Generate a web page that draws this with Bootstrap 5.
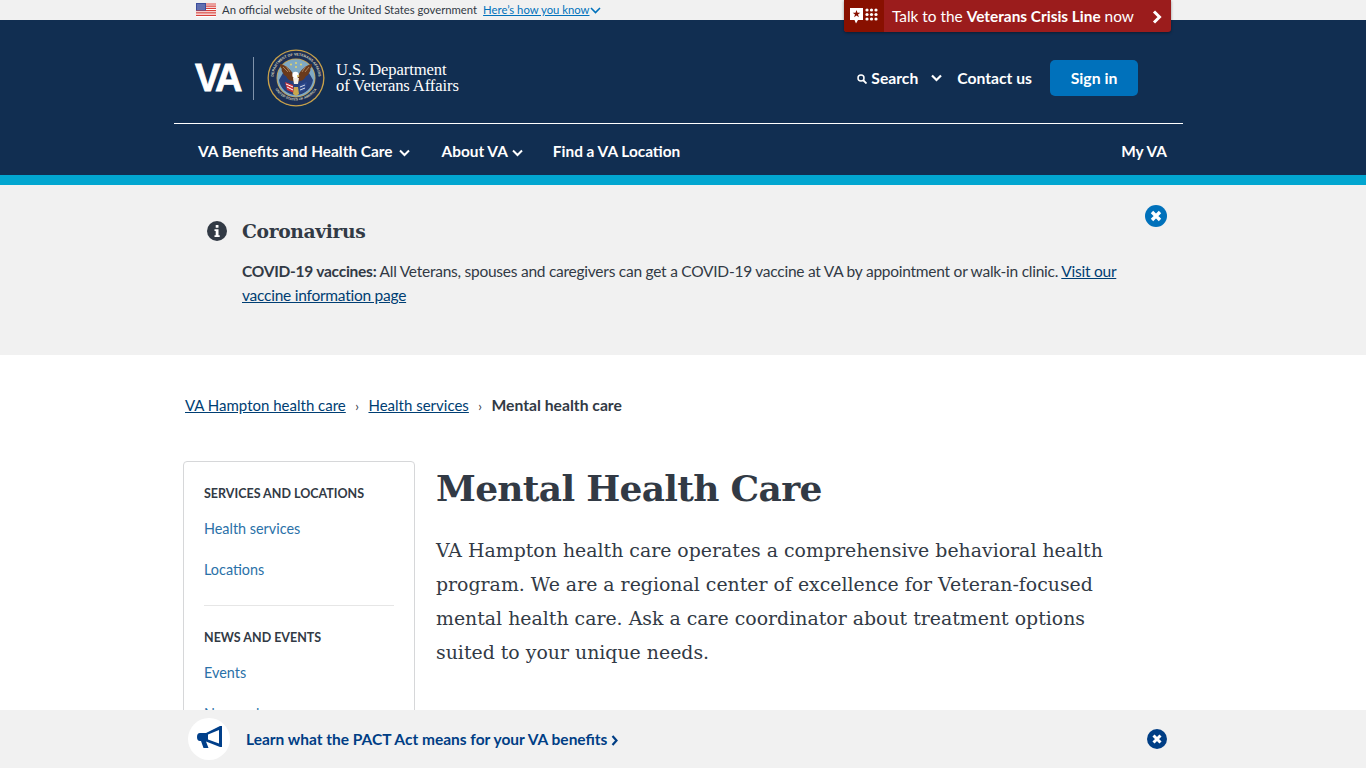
<!DOCTYPE html>
<html lang="en"><head><meta charset="utf-8"><title>Mental Health Care</title>
<link href="https://cdn.jsdelivr.net/npm/bootstrap@5.3.0/dist/css/bootstrap.min.css" rel="stylesheet">
<style>
html,body{height:768px;overflow:hidden}
body{font-family:Lato,"Liberation Sans",sans-serif;color:#323a45;font-size:16px;background:#fff}
.va-wrap{width:1009px;margin-left:174px}
.gov-bar{height:20px;background:#f1f1f1;font-size:11.3px;line-height:20px;padding-left:22px}
.gov-bar a{color:#0071bb;margin-left:6px;margin-right:1px}
.flag{width:20px;height:14px;margin-right:6px}
.crisis{position:absolute;left:844px;top:0;width:327px;height:32px;padding-top:1px;background:#9b1c1c;color:#fff;border-radius:0 0 3px 3px;box-shadow:0 1px 3px rgba(0,0,0,.4);font-size:15.4px}
.crisis-ico{width:40px;height:32px;margin-top:-1px;background:#881000;border-radius:0 0 0 3px}
.head{background:#112e51;height:155px;color:#fff}
.logo-row{height:104px;padding:13px 45px 0 21px;border-bottom:1px solid #fff}
.va-mark{font:700 38px/1 "Liberation Sans",sans-serif;letter-spacing:-2.6px;width:47px;-webkit-text-stroke:.8px #fff}
.va-sep{width:1px;height:43px;background:#7f93ab;margin:0 13px 0 11px}
.seal{width:58px;height:58px;margin-right:11px}
.dept{font:16.6px/16px "Liberation Serif",serif;letter-spacing:-.1px}
.util{font-weight:700;font-size:15.7px;color:#fff;text-decoration:none;padding-top:2px}
.util-chev{margin:0 15px 0 13px}
.util-last{margin-right:18px}
.signin{background:#0071bb;color:#fff;font-weight:700;font-size:15.8px;border:0;border-radius:5px;width:88px;height:36px;padding:0}
.nav-row{height:51px;padding:5px 16px 0 24px;font-weight:700;font-size:15.4px}
.nav-row a{color:#fff;text-decoration:none}
.nav-gap{margin-left:32px}
.nav-gap2{margin-left:30px}
.chev{width:11px;height:8px;margin-left:6px}
.chev.tight{margin-left:4px}
.stripe{height:10px;background:#02a6d0}
.alert-band{height:170px;background:#f1f1f1}
.alert-in{padding:33px 16px 0 33px}
.ai{width:20px;height:20px;margin-top:3px;margin-right:15px}
.alert-h{font:700 18.7px/26px "DejaVu Serif",serif;letter-spacing:-.35px;margin:0 0 15px}
.alert-t{font-size:15.5px;letter-spacing:-.25px;line-height:24px;margin:0;width:885px}
.alert-t a,.crumbs a{color:#003e73}
.close-x{width:22px;height:22px;position:absolute;left:1145px;top:205px}
.crumbs{margin:40px 0 0 11px;height:20px;font-size:15px;line-height:20px}
.crumbs i{font-style:normal;margin:0 9.5px;font-size:13px}
.crumbs b{font-size:15.7px}
.body-row{margin:46px 0 0 9px}
.side{width:232px;height:400px;border:1px solid #d6d7d9;border-radius:4px;padding:22px 20px;flex:none;margin-right:21px}
.side h2{font-size:12.5px;font-weight:700;margin:0;line-height:20px;text-transform:uppercase}
.side a{display:block;color:#2a71a8;text-decoration:none;font-size:14.4px;line-height:20px}
.side a.first-l{margin-top:15px}
.side a.next-l{margin-top:21px}
.side hr{margin:25px 0 22px;border-color:#9a9a9a}
h1.pg{font:700 36px/50px "DejaVu Serif",serif;letter-spacing:-.7px;margin:2px 0 20px}
.intro{font:18.9px/34px "DejaVu Serif",serif;width:690px;margin:0}
.promo{position:fixed;left:0;right:0;bottom:0;height:58px;background:#f1f1f1}
.promo-c{width:42px;height:42px;border-radius:50%;background:#fff;margin:0 16px 0 14px}
.promo-c svg{margin-top:-4px}
.promo a{color:#003e85;font-weight:700;font-size:15.5px;text-decoration:none;padding-top:1px}
.promo-x{width:20px;height:20px;position:absolute;left:1147px;top:19px}
</style></head><body>
<div class="gov-bar"><div class="va-wrap d-flex align-items-center">
<svg class="flag" viewBox="0 0 20 14"><rect width="20" height="14" fill="#fff"/><path d="M0 1h20M0 3.200h20M0 5.400h20M0 7.600h20M0 9.800h20M0 12.400h20" stroke="#d8403a" stroke-width="1.200"/><rect width="10" height="7.500" fill="#3b4d9c"/><path d="M1.500 2h7M1.500 4h7M1.500 6h7" stroke="#fff" stroke-width=".8" stroke-dasharray="1 1"/></svg>
<span>An official website of the United States government</span> <a href="#">Here’s how you know</a>
<svg width="11" height="7" viewBox="0 0 11 7"><path d="M1 1l4.500 4.500L10 1" fill="none" stroke="#0071bb" stroke-width="1.600"/></svg>
</div></div>
<div class="crisis d-flex align-items-center">
<div class="crisis-ico d-flex align-items-center justify-content-center"><svg width="28" height="16" viewBox="0 0 28 16"><path d="M0 0h13v12H8l-2 3.500-1.500-3.500H0z" fill="#fff"/><path d="M6.500 2l1 2.700h2.800L8 6.400l.9 2.800-2.400-1.700-2.400 1.700.9-2.800L2.700 4.700h2.800z" fill="#881000"/><g fill="#fff"><circle cx="17" cy="2" r="1.600"/><circle cx="21.500" cy="2" r="1.600"/><circle cx="26" cy="2" r="1.600"/><circle cx="17" cy="6.500" r="1.600"/><circle cx="21.500" cy="6.500" r="1.600"/><circle cx="26" cy="6.500" r="1.600"/><circle cx="17" cy="11" r="1.600"/><circle cx="21.500" cy="11" r="1.600"/><circle cx="26" cy="11" r="1.600"/></g></svg></div>
<span class="ms-2">Talk to the <b>Veterans Crisis Line</b> now</span>
<svg class="ms-auto me-2" width="12" height="14" viewBox="0 0 12 14"><path d="M3 1.500L8.500 7 3 12.500" fill="none" stroke="#fff" stroke-width="3"/></svg>
</div>
<header class="head"><div class="va-wrap">
<div class="logo-row d-flex align-items-center">
<span class="va-mark">VA</span><span class="va-sep"></span>
<svg class="seal" viewBox="0 0 58 58">
<defs><path id="sealTop" d="M10.600 42A22.500 22.500 0 1 1 47.400 42"/><path id="sealBot" d="M6 36A24.800 24.800 0 0 0 52 36"/></defs>
<circle cx="29" cy="29" r="28.500" fill="#c9a24a"/><circle cx="29" cy="29" r="27.200" fill="#1b2f56"/><circle cx="29" cy="29" r="19.500" fill="#c9a24a"/><circle cx="29" cy="29" r="18.700" fill="#7fa9c4"/>
<text font-family="Liberation Sans,sans-serif" font-size="3.600" font-weight="700" fill="#d9d3b8"><textPath href="#sealTop" startOffset="50%" text-anchor="middle">DEPARTMENT OF VETERANS AFFAIRS</textPath></text>
<text font-family="Liberation Sans,sans-serif" font-size="3.400" font-weight="700" fill="#d9d3b8"><textPath href="#sealBot" startOffset="50%" text-anchor="middle">UNITED STATES OF AMERICA</textPath></text>
<path d="M12 31l4-7 13 8 13-8 4 7c-1 8-8 15-17 15s-16-7-17-15z" fill="#26407c"/>
<path d="M28 29C25 21 19 16 13 15c0 3 1 4 2 5-1 0 0 3 1 4 0 1 2 3 3 3 1 3 4 5 7 5l1 2h4l1-2c3 0 6-2 7-5 1 0 3-2 3-3 1-1 2-4 1-4 1-1 2-2 2-5-6 1-12 6-15 14z" fill="#6a3a1c"/>
<path d="M16 18l5 5M19 17l4 6M38 23l4-5M35 23l4-6" stroke="#a8815a" stroke-width="1"/>
<circle cx="28.500" cy="26" r="3.200" fill="#fff"/><path d="M30 26l3 1-3 1z" fill="#e3c95a"/><path d="M26 29h6l-1 6h-4z" fill="#f2efe6"/>
<path d="M18 33l8 3 1 8-7-3z" fill="#c8323a"/><path d="M19 35l7 3M20 38l6 3" stroke="#fff" stroke-width="1"/><path d="M40 33l-8 3-1 8 7-3z" fill="#2d4a8e"/><path d="M38 36l-5 2M38 39l-5 2" stroke="#fff" stroke-width=".8"/><path d="M27 38h4l1 7-3 2-3-2z" fill="#c8a84e"/>
<g fill="#e3d76a"><circle cx="24" cy="15.500" r="1"/><circle cx="29" cy="14" r="1"/><circle cx="34" cy="15.500" r="1"/><circle cx="29" cy="18" r="1"/></g></svg>
<div class="dept">U.S. Department<br>of Veterans Affairs</div>
<div class="ms-auto d-flex align-items-center">
<a class="util d-flex align-items-center" href="#"><svg width="10" height="10" viewBox="0 0 10 10" class="me-1"><circle cx="4" cy="4" r="3" fill="none" stroke="#fff" stroke-width="1.500"/><path d="M6 6l3.500 3.500" stroke="#fff" stroke-width="1.800"/></svg>Search</a>
<svg class="util-chev" width="11" height="8" viewBox="0 0 11 8"><path d="M1 1.500l4.500 4.500L10 1.500" fill="none" stroke="#fff" stroke-width="2.200"/></svg>
<a class="util util-last" href="#">Contact us</a>
<button class="signin btn">Sign in</button>
</div></div>
<nav class="nav-row d-flex align-items-center">
<a href="#">VA Benefits and Health Care<svg class="chev" viewBox="0 0 11 8"><path d="M1 1.500l4.500 4.500 4.500-4.500" fill="none" stroke="#fff" stroke-width="2"/></svg></a>
<a class="nav-gap" href="#">About VA<svg class="chev tight" viewBox="0 0 11 8"><path d="M1 1.500l4.500 4.500 4.500-4.500" fill="none" stroke="#fff" stroke-width="2"/></svg></a>
<a class="nav-gap2" href="#">Find a VA Location</a>
<a class="ms-auto" href="#">My VA</a>
</nav></div></header>
<div class="stripe"></div>
<section class="alert-band"><div class="va-wrap alert-in d-flex">
<svg class="ai" viewBox="0 0 20 20"><circle cx="10" cy="10" r="10" fill="#323a45"/><rect x="8.700" y="4" width="2.800" height="2.800" rx=".6" fill="#fff"/><path d="M7.500 8.300h4v6h1.200v1.700H7.500v-1.700h1.200V10H7.500z" fill="#fff"/></svg>
<div><h3 class="alert-h">Coronavirus</h3>
<p class="alert-t"><b>COVID-19 vaccines:</b> All Veterans, spouses and caregivers can get a COVID-19 vaccine at VA by appointment or walk-in clinic. <a href="#">Visit our vaccine information page</a></p></div>
</div></section>
<svg class="close-x" viewBox="0 0 22 22"><circle cx="11" cy="11" r="11" fill="#0071bb"/><path d="M7 7l8 8M15 7l-8 8" stroke="#fff" stroke-width="3.400"/></svg>
<div class="va-wrap">
<nav class="crumbs"><a href="#">VA Hampton health care</a><i>›</i><a href="#">Health services</a><i>›</i><b>Mental health care</b></nav>
<div class="body-row d-flex">
<aside class="side">
<h2>Services and locations</h2>
<a class="first-l" href="#">Health services</a><a class="next-l" href="#">Locations</a>
<hr>
<h2>News and events</h2>
<a class="first-l" href="#">Events</a><a class="next-l" href="#">News releases</a>
</aside>
<main><h1 class="pg">Mental Health Care</h1>
<p class="intro">VA Hampton health care operates a comprehensive behavioral health program. We are a regional center of excellence for Veteran-focused mental health care. Ask a care coordinator about treatment options suited to your unique needs.</p></main>
</div></div>
<div class="promo d-flex align-items-center"><div class="va-wrap d-flex align-items-center">
<div class="promo-c d-flex align-items-center justify-content-center"><svg width="25" height="22" viewBox="0 0 25 22"><path d="M23 0h2v21h-2L9 15.500 11.500 22h-5L4 15H3Q0 15 0 11T3 7h6zM22 4L11 8.500v5L22 17.500z" fill="#003f8a" fill-rule="evenodd"/></svg></div>
<a href="#">Learn what the PACT Act means for your VA benefits<svg class="ms-1" width="8" height="11" viewBox="0 0 8 11"><path d="M1.500 1l4 4.500-4 4.500" fill="none" stroke="#003e85" stroke-width="2.200"/></svg></a>
</div>
<svg class="promo-x" viewBox="0 0 20 20"><circle cx="10" cy="10" r="10" fill="#003e85"/><path d="M6.500 6.500l7 7M13.500 6.500l-7 7" stroke="#fff" stroke-width="3"/></svg>
</div>
<script src="https://cdn.jsdelivr.net/npm/bootstrap@5.3.0/dist/js/bootstrap.bundle.min.js"></script>
</body></html>
